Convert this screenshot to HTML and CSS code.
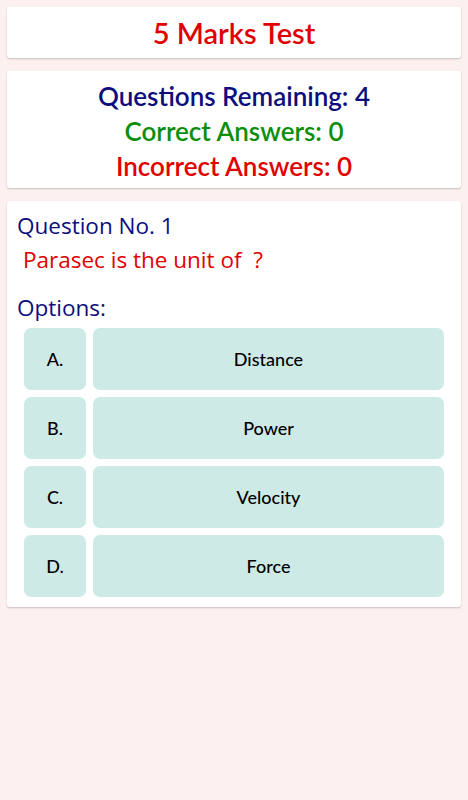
FILE: index.html
```html
<!DOCTYPE html>
<html>
<head>
<meta charset="utf-8">
<link rel="stylesheet" href="styles.css">
</head>
<body>
<div class="page">
  <div class="card title-card">
    <h1 class="title">5 Marks Test</h1>
  </div>
  <div class="card stats-card">
    <div class="stat remaining">Questions Remaining: 4</div>
    <div class="stat correct">Correct Answers: 0</div>
    <div class="stat incorrect">Incorrect Answers: 0</div>
  </div>
  <div class="card question-card">
    <div class="qno">Question No. 1</div>
    <div class="qtext">Parasec is the unit of&nbsp; ?</div>
    <div class="opt-label">Options:</div>
    <div class="options">
      <div class="opt-key">A.</div><div class="opt-val">Distance</div>
      <div class="opt-key">B.</div><div class="opt-val">Power</div>
      <div class="opt-key">C.</div><div class="opt-val">Velocity</div>
      <div class="opt-key">D.</div><div class="opt-val">Force</div>
    </div>
  </div>
</div>
</body>
</html>
```
FILE: styles.css
```css
html, body {
  margin: 0;
  padding: 0;
  background: #fdf1f0;
}
body {
  font-family: Lato, "Open Sans", sans-serif;
}
.page {
  padding: 7px;
  display: flex;
  flex-direction: column;
  gap: 13px;
}
.card {
  background: #ffffff;
  border-radius: 3px;
  box-shadow: 0 1px 2px rgba(0,0,0,0.22);
}
.title-card {
  height: 51px;
  display: flex;
  align-items: center;
  justify-content: center;
}
.title {
  margin: 0;
  font-size: 29px;
  font-weight: 600;
  color: #e00000;
  line-height: 1;
}
.stats-card {
  padding: 8px 0 4px 0;
  text-align: center;
  height: 105px;
}
.stat {
  font-size: 26px;
  font-weight: 600;
  line-height: 35px;
}
.remaining { color: #0d0d7c; }
.correct { color: #0b8f0b; }
.incorrect { color: #e00000; }
.question-card {
  padding: 8px 17px 10px 17px;
}
.qno, .qtext, .opt-label {
  font-family: "Open Sans", sans-serif;
  font-size: 22.5px;
  line-height: 34px;
}
.qno {
  color: #0d0d7c;
  margin-left: -7px;
}
.qtext {
  color: #e00000;
  margin-left: -1px;
}
.opt-label {
  color: #0d0d7c;
  margin-left: -7px;
  margin-top: 14px;
  margin-bottom: 3px;
}
.options {
  display: grid;
  grid-template-columns: 62px 1fr;
  column-gap: 7px;
  row-gap: 7px;
}
.opt-key, .opt-val {
  background: #cdeae7;
  border-radius: 7px;
  height: 62px;
  display: flex;
  align-items: center;
  justify-content: center;
  font-size: 18px;
  font-weight: 500;
  color: #000;
}
```
